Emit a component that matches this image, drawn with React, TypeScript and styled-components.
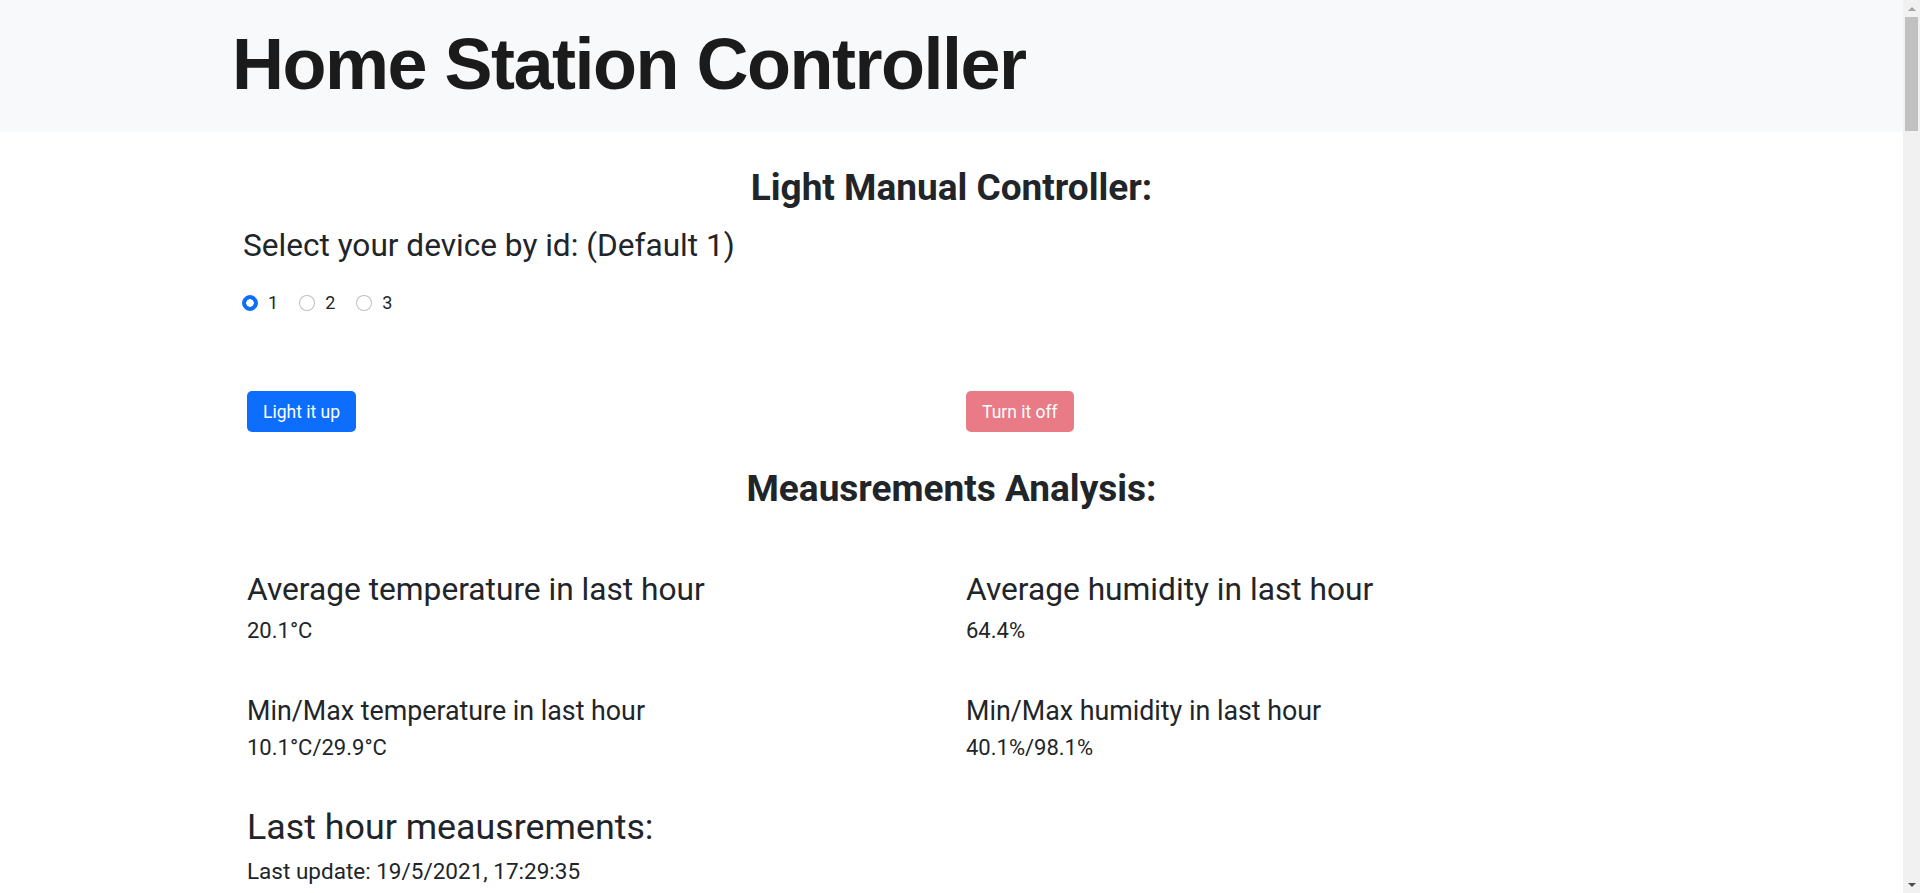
import { useState } from "react"
import styled, { createGlobalStyle } from "styled-components"

const GlobalStyle = createGlobalStyle`
  body {
    margin: 0;
    background: #fff;
    color: #212529;
    font-family: Roboto, "Liberation Sans", Arial, sans-serif;
  }
  *, *::before, *::after {
    box-sizing: border-box;
  }
`

// the browser window's scrollbar, as the screenshot shows it
const ScrollRail = styled.div`
  position: fixed;
  top: 0;
  right: 0;
  width: 17px;
  height: 100vh;
  background: #f1f1f1;
  display: flex;
  flex-direction: column;
  align-items: center;
`

const ScrollButton = styled.div`
  height: 17px;
  width: 100%;
  display: flex;
  align-items: center;
  justify-content: center;
`

interface ArrowProps {
  $dir: "up" | "down"
}

const ScrollArrow = styled.span<ArrowProps>`
  width: 0;
  height: 0;
  border-left: 4px solid transparent;
  border-right: 4px solid transparent;
  border-bottom: ${({ $dir }) => ($dir === "up" ? "4px solid #a3a3a3" : "0")};
  border-top: ${({ $dir }) => ($dir === "down" ? "4px solid #505050" : "0")};
`

const ScrollThumb = styled.div`
  width: 13px;
  height: 114px;
  background: #c1c1c1;
`

const ScrollSpace = styled.div`
  flex: 1;
`

const Content = styled.div`
  margin-right: 17px;
`

const Header = styled.header`
  background-color: #f8f9fa;
  height: 132px;
  padding-top: 21px;
`

const HeaderInner = styled.div`
  max-width: 1439px;
  margin: 0 auto;
`

const Title = styled.h1`
  margin: 0;
  font-family: "Liberation Sans", Arial, sans-serif;
  font-weight: 700;
  font-size: 72px;
  line-height: 1.2;
  letter-spacing: -1.5px;
  color: #1b1b1b;
`

const Main = styled.main`
  max-width: 1433px;
  margin: 0 auto;
  padding-bottom: 40px;
`

interface SpacedProps {
  $top: number
}

const SectionTitle = styled.h3<SpacedProps>`
  margin: ${({ $top }) => $top}px 0 0;
  text-align: center;
  font-size: 37px;
  font-weight: 700;
  line-height: 42px;
`

const DeviceBlock = styled.div`
  padding-left: 4px;
`

const DeviceLabel = styled.h4`
  margin: 19px 0 0;
  padding-left: 4px;
  font-size: 31.6px;
  font-weight: 400;
  line-height: 36px;
`

const RadioGroup = styled.div`
  display: flex;
  align-items: center;
  gap: 21px;
  margin-top: 26px;
  padding-left: 3px;
  height: 26px;
`

const RadioItem = styled.label`
  display: flex;
  align-items: center;
  gap: 10px;
  font-size: 18px;
  line-height: 26px;
  cursor: pointer;
`

const Radio = styled.input.attrs({ type: "radio" })`
  appearance: none;
  margin: 0;
  width: 16px;
  height: 16px;
  border-radius: 50%;
  border: 1px solid rgba(0, 0, 0, 0.25);
  background: #fff;
  cursor: pointer;

  &:checked {
    border-color: #0d6efd;
    background: radial-gradient(circle, #fff 0 3.5px, #0d6efd 4px);
  }
`

const Row = styled.div<SpacedProps>`
  display: grid;
  grid-template-columns: 1fr 1fr;
  column-gap: 5px;
  margin-top: ${({ $top }) => $top}px;
`

const Col = styled.div`
  padding: 0 12px;
`

interface ButtonProps {
  $variant: "primary" | "danger"
}

const Button = styled.button<ButtonProps>`
  height: 41px;
  padding: 0 16px;
  border: none;
  border-radius: 5px;
  font-family: inherit;
  font-size: 17.5px;
  color: #fff;
  cursor: pointer;
  background-color: ${({ $variant }) =>
    $variant === "primary" ? "#0d6efd" : "#dc3545"};

  &:disabled {
    opacity: 0.65;
    cursor: default;
  }
`

const StatTitle = styled.h4`
  margin: 0;
  font-size: 31.7px;
  font-weight: 400;
  line-height: 36px;
`

const StatSubTitle = styled.h5`
  margin: 0;
  font-size: 26.8px;
  font-weight: 400;
  line-height: 30px;
`

interface ValueProps {
  $top: number
  $size?: number
}

const Value = styled.p<ValueProps>`
  margin: ${({ $top }) => $top}px 0 0;
  font-size: ${({ $size = 22 }) => $size}px;
  line-height: 30px;
`

const StatGroup = styled.div<SpacedProps>`
  margin-top: ${({ $top }) => $top}px;
`

const History = styled.section`
  margin-top: 41px;
  padding: 0 12px;
`

const HistoryTitle = styled.h2`
  margin: 0;
  font-size: 35.8px;
  font-weight: 400;
  line-height: 46px;
`

const Table = styled.table`
  margin-top: 24px;
  width: 100%;
  border-collapse: collapse;
  font-size: 18px;

  th,
  td {
    text-align: left;
    padding: 8px 10px;
    border-bottom: 1px solid #dee2e6;
  }
`

const history = Array.from({ length: 60 }, (_, i) => {
  const minute = 29 - (i % 30)
  const hour = i < 30 ? 17 : 16
  return {
    time: `${hour}:${String(minute).padStart(2, "0")}:35`,
    temperature: (20.1 + Math.sin(i / 3) * 6).toFixed(1),
    humidity: (64.4 + Math.cos(i / 4) * 20).toFixed(1),
  }
})

const App = () => {
  const [device, setDevice] = useState(1)

  return (
    <>
      <GlobalStyle />
      <Content>
        <Header>
          <HeaderInner>
            <Title>Home Station Controller</Title>
          </HeaderInner>
        </Header>
        <Main>
          <SectionTitle $top={35}>Light Manual Controller:</SectionTitle>
          <DeviceBlock>
            <DeviceLabel>Select your device by id: (Default 1)</DeviceLabel>
            <RadioGroup>
              {[1, 2, 3].map(id => (
                <RadioItem key={id}>
                  <Radio
                    name="device"
                    checked={device === id}
                    onChange={() => setDevice(id)}
                  />
                  {id}
                </RadioItem>
              ))}
            </RadioGroup>
          </DeviceBlock>

          <Row $top={75}>
            <Col>
              <Button $variant="primary">Light it up</Button>
            </Col>
            <Col>
              <Button $variant="danger" disabled>
                Turn it off
              </Button>
            </Col>
          </Row>

          <SectionTitle $top={36}>Meausrements Analysis:</SectionTitle>

          <Row $top={62}>
            <Col>
              <StatTitle>Average temperature in last hour</StatTitle>
              <Value $top={8}>20.1°C</Value>
              <StatGroup $top={50}>
                <StatSubTitle>Min/Max temperature in last hour</StatSubTitle>
                <Value $top={7}>10.1°C/29.9°C</Value>
              </StatGroup>
            </Col>
            <Col>
              <StatTitle>Average humidity in last hour</StatTitle>
              <Value $top={8}>64.4%</Value>
              <StatGroup $top={50}>
                <StatSubTitle>Min/Max humidity in last hour</StatSubTitle>
                <Value $top={7}>40.1%/98.1%</Value>
              </StatGroup>
            </Col>
          </Row>

          <History>
            <HistoryTitle>Last hour meausrements:</HistoryTitle>
            <Value $top={6} $size={22.5}>
              Last update: 19/5/2021, 17:29:35
            </Value>
            <Table>
              <thead>
                <tr>
                  <th>Time</th>
                  <th>Temperature</th>
                  <th>Humidity</th>
                </tr>
              </thead>
              <tbody>
                {history.map(row => (
                  <tr key={row.time}>
                    <td>{row.time}</td>
                    <td>{row.temperature}°C</td>
                    <td>{row.humidity}%</td>
                  </tr>
                ))}
              </tbody>
            </Table>
          </History>
        </Main>
      </Content>
      <ScrollRail>
        <ScrollButton>
          <ScrollArrow $dir="up" />
        </ScrollButton>
        <ScrollThumb />
        <ScrollSpace />
        <ScrollButton>
          <ScrollArrow $dir="down" />
        </ScrollButton>
      </ScrollRail>
    </>
  )
}

export default App
